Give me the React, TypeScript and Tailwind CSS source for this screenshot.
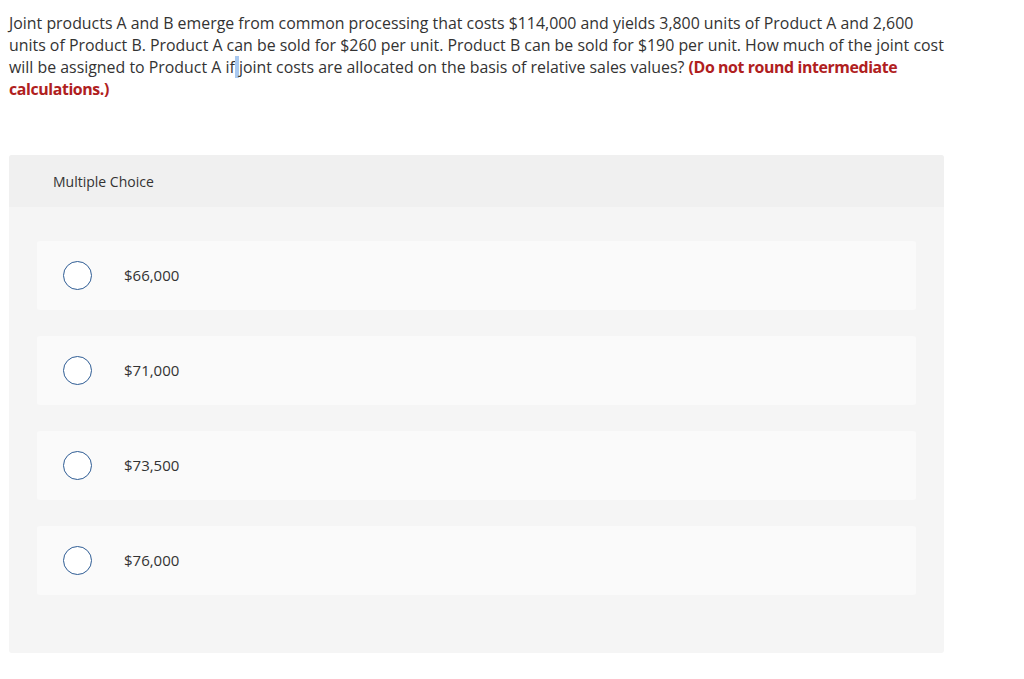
import React from "react";

const options = ["$66,000", "$71,000", "$73,500", "$76,000"];

export default function App() {
  return (
    <div className="min-h-[679px] w-[1024px] bg-white text-[#333333] [font-family:'Open_Sans',Lato,sans-serif]">
      <div className="pl-[9px] pt-[12px]">
        <p className="text-[15.9px] leading-[22px] whitespace-nowrap">
          Joint products A and B emerge from common processing that costs $114,000 and yields 3,800 units of Product A and 2,600
          <br />
          units of Product B. Product A can be sold for $260 per unit. Product B can be sold for $190 per unit. How much of the joint cost
          <br />
          will be assigned to Product A if<span className="bg-[#a8c8f0]"> </span>joint costs are allocated on the basis of relative sales values?{" "}
          <strong className="font-bold tracking-[-0.4px] text-[#b0201e]">(Do not round intermediate</strong>
          <br />
          <strong className="font-bold tracking-[-0.4px] text-[#b0201e]">calculations.)</strong>
        </p>
      </div>
      <div className="ml-[9px] mt-[55px] w-[935px] rounded-[3px] bg-[#f5f5f5] overflow-hidden">
        <div className="h-[52px] bg-[#f0f0f0] flex items-center pl-[44px] text-[14px]">Multiple Choice</div>
        <div className="flex flex-col gap-[26px] px-[28px] pt-[34px] pb-[58px]">
          {options.map((o) => (
            <div key={o} className="h-[69px] rounded-[3px] bg-[#fafafa] flex items-center">
              <div className="ml-[26px] w-[29px] h-[29px] rounded-full border-[1.5px] border-[#2e5c94] bg-white" />
              <span className="ml-[32px] text-[15px]">{o}</span>
            </div>
          ))}
        </div>
      </div>
    </div>
  );
}
